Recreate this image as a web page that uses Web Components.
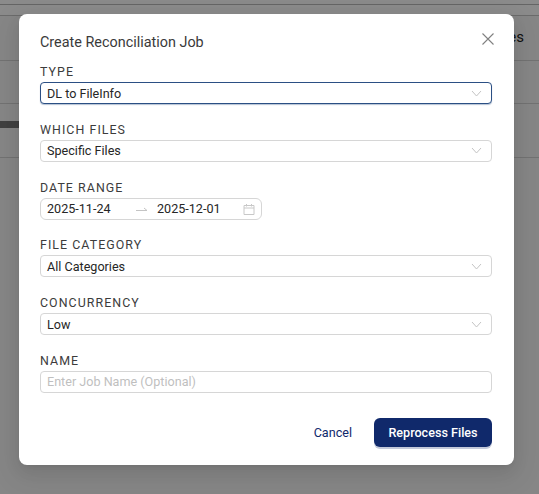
<!DOCTYPE html>
<html lang="en">
<head>
<meta charset="utf-8">
<title>Create Reconciliation Job</title>
<style>
    html, body { margin: 0; height: 100%; background: #f5f5f5; overflow: hidden; }
    body { font-family: Roboto, "Liberation Sans", sans-serif; }
</style>
</head>
<body>
<app-backdrop>
    <recon-modal heading="Create Reconciliation Job">
        <form-field label="Type"><select-box value="DL to FileInfo" focused></select-box></form-field>
        <form-field label="Which Files"><select-box value="Specific Files"></select-box></form-field>
        <form-field label="Date Range"><date-range start="2025-11-24" end="2025-12-01"></date-range></form-field>
        <form-field label="File Category"><select-box value="All Categories"></select-box></form-field>
        <form-field label="Concurrency"><select-box value="Low"></select-box></form-field>
        <form-field label="Name"><text-box placeholder="Enter Job Name (Optional)"></text-box></form-field>
        <span slot="cancel">Cancel</span>
        <span slot="submit">Reprocess Files</span>
    </recon-modal>
</app-backdrop>

<script>
class AppBackdrop extends HTMLElement {
    constructor() {
        super();
        this.attachShadow({ mode: 'open' });
        this.shadowRoot.innerHTML = `
            <style>
                :host {
                    display: block;
                    position: relative;
                    height: 100%;
                    overflow: hidden;
                }
                .page { color: #222; font-size: 14px; }
                .row { border-bottom: 1px solid #cfcfcf; box-sizing: border-box; }
                .r1 { height: 5px; background: #fdfdfd; border-bottom-color: #b8b8b8; }
                .r2 { height: 11px; background: #fdfdfd; border-bottom-color: #c4c4c4; }
                .r3 {
                    height: 45px;
                    display: flex;
                    justify-content: flex-end;
                    align-items: flex-start;
                    padding: 12px 15px 0 0;
                    font-size: 15px;
                    line-height: 18px;
                }
                .r4 { height: 43px; }
                .r5 { height: 37px; }
                .bar { height: 7px; width: 60px; background: #767676; margin-top: 17px; }
                .overlay {
                    position: absolute;
                    inset: 0;
                    background: rgba(0, 0, 0, 0.45);
                    display: flex;
                    justify-content: flex-start;
                    align-items: flex-start;
                    padding: 14px 0 0 19px;
                }
            </style>
            <div class="page">
                <div class="row r1"></div>
                <div class="row r2"></div>
                <div class="row r3">Files</div>
                <div class="row r4"></div>
                <div class="row r5"><div class="bar"></div></div>
            </div>
            <div class="overlay"><slot></slot></div>
        `;
    }
}

class ReconModal extends HTMLElement {
    constructor() {
        super();
        this.attachShadow({ mode: 'open' });
    }

    connectedCallback() {
        const heading = this.getAttribute('heading') || '';
        this.shadowRoot.innerHTML = `
            <style>
                :host {
                    display: block;
                    width: 495px;
                    height: 451px;
                    box-sizing: border-box;
                    background: #fff;
                    border-radius: 8px;
                    padding: 20px 22px 18px 21px;
                    position: relative;
                    box-shadow: 0 6px 16px rgba(0, 0, 0, 0.08), 0 3px 6px -4px rgba(0, 0, 0, 0.12), 0 9px 28px 8px rgba(0, 0, 0, 0.05);
                    font-family: Roboto, "Liberation Sans", sans-serif;
                }
                .title {
                    font-size: 14.4px;
                    line-height: 18px;
                    color: #3a3a3a;
                    margin-bottom: 13px;
                }
                .close {
                    position: absolute;
                    top: 19px;
                    right: 20px;
                    width: 12px;
                    height: 12px;
                    display: block;
                }
                .footer {
                    display: flex;
                    justify-content: flex-end;
                    align-items: center;
                    gap: 22px;
                    margin-top: 6px;
                }
                .cancel { font-size: 12.6px; color: #10296b; }
                .submit {
                    width: 118px;
                    height: 29px;
                    display: flex;
                    align-items: center;
                    justify-content: center;
                    box-sizing: border-box;
                    background: #10296b;
                    color: #fff;
                    border-radius: 6px;
                    font-size: 12.6px;
                    font-weight: 500;
                    box-shadow: 0 2px 0 rgba(16, 41, 107, 0.25);
                }
            </style>
            <div class="title">${heading}</div>
            <svg class="close" viewBox="0 0 12 12" fill="none" stroke="#808080" stroke-width="1.1"><path d="M.5.5l11 11M11.5.5l-11 11"/></svg>
            <slot></slot>
            <div class="footer">
                <div class="cancel"><slot name="cancel"></slot></div>
                <div class="submit"><slot name="submit"></slot></div>
            </div>
        `;
    }
}

class FormField extends HTMLElement {
    constructor() {
        super();
        this.attachShadow({ mode: 'open' });
    }

    connectedCallback() {
        this.shadowRoot.innerHTML = `
            <style>
                :host { display: block; height: 57.8px; }
                .label {
                    font-size: 12.4px;
                    line-height: 14px;
                    letter-spacing: 1.05px;
                    text-transform: uppercase;
                    color: #3c3c3c;
                    margin-bottom: 3px;
                }
            </style>
            <div class="label">${this.getAttribute('label') || ''}</div>
            <slot></slot>
        `;
    }
}

const BOX_CSS = `
    box-sizing: border-box;
    height: 22px;
    background: #fff;
    border: 1px solid #d6d6d6;
    border-radius: 4px;
    display: flex;
    align-items: center;
    padding: 0 6px;
    font-size: 12.6px;
    color: #262626;
`;

class SelectBox extends HTMLElement {
    constructor() {
        super();
        this.attachShadow({ mode: 'open' });
    }

    connectedCallback() {
        const focused = this.hasAttribute('focused');
        this.shadowRoot.innerHTML = `
            <style>
                :host { display: block; }
                .box { ${BOX_CSS} justify-content: space-between; }
                .box.focused {
                    border-color: #2b4f84;
                    box-shadow: 0 1px 1px rgba(43, 79, 132, 0.35);
                }
                svg { width: 11px; height: 7px; margin-right: 3px; }
            </style>
            <div class="box ${focused ? 'focused' : ''}">
                <span>${this.getAttribute('value') || ''}</span>
                <svg viewBox="0 0 11 7" fill="none" stroke="#c4c4c4" stroke-width="1"><path d="M1 1l4.5 5L10 1"/></svg>
            </div>
        `;
    }
}

class DateRange extends HTMLElement {
    constructor() {
        super();
        this.attachShadow({ mode: 'open' });
    }

    connectedCallback() {
        this.shadowRoot.innerHTML = `
            <style>
                :host { display: block; width: 222px; }
                .box { ${BOX_CSS} border-radius: 6px; }
                .start { width: 89px; }
                .sep { width: 13px; height: 6px; margin-right: 8px; }
                .end { flex: 1; }
                .cal { width: 12px; height: 12px; }
            </style>
            <div class="box">
                <span class="start">${this.getAttribute('start') || ''}</span>
                <svg class="sep" viewBox="0 0 13 6" fill="none" stroke="#c4c4c4" stroke-width="1"><path d="M0 4.5h11M8 2l3 2.5"/></svg>
                <span class="end">${this.getAttribute('end') || ''}</span>
                <svg class="cal" viewBox="0 0 12 12" fill="none" stroke="#c8c8c8" stroke-width="1"><path d="M1 2.5h10v9H1zM1 5h10M3.5 1v2.5M8.5 1v2.5"/></svg>
            </div>
        `;
    }
}

class TextBox extends HTMLElement {
    constructor() {
        super();
        this.attachShadow({ mode: 'open' });
    }

    connectedCallback() {
        this.shadowRoot.innerHTML = `
            <style>
                :host { display: block; }
                .box { ${BOX_CSS} color: #bfbfbf; }
            </style>
            <div class="box">${this.getAttribute('placeholder') || ''}</div>
        `;
    }
}

customElements.define('app-backdrop', AppBackdrop);
customElements.define('recon-modal', ReconModal);
customElements.define('form-field', FormField);
customElements.define('select-box', SelectBox);
customElements.define('date-range', DateRange);
customElements.define('text-box', TextBox);
</script>
</body>
</html>
